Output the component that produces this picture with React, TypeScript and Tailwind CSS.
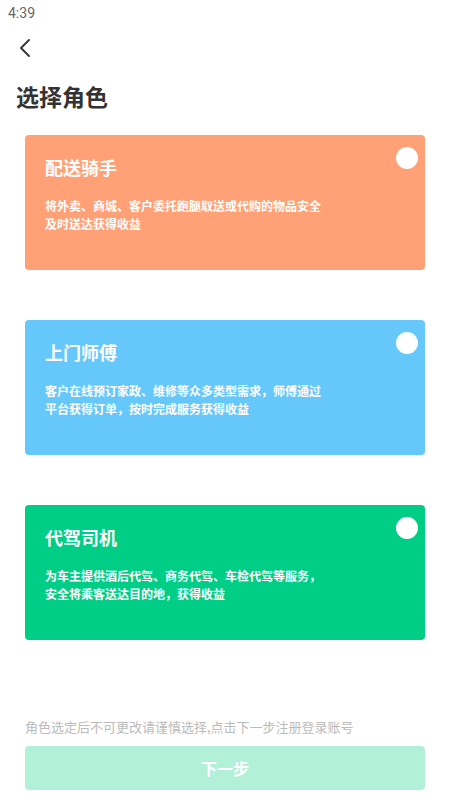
import React from "react";

const roles = [
  {
    title: "配送骑手",
    desc: ["将外卖、商城、客户委托跑腿取送或代购的物品安全", "及时送达获得收益"],
    bg: "bg-[#FFA077]",
  },
  {
    title: "上门师傅",
    desc: ["客户在线预订家政、维修等众多类型需求，师傅通过", "平台获得订单，按时完成服务获得收益"],
    bg: "bg-[#66C8FA]",
  },
  {
    title: "代驾司机",
    desc: ["为车主提供酒后代驾、商务代驾、车检代驾等服务，", "安全将乘客送达目的地，获得收益"],
    bg: "bg-[#00CE87]",
  },
];

export default function App() {
  return (
    <div
      className="w-[450px] h-[800px] bg-white flex flex-col"
      style={{ fontFamily: '"Noto Sans CJK SC", "Noto Sans", sans-serif' }}
    >
      <div className="h-[25px] pl-[8px] pt-[3px] text-[14px] leading-[20px] text-[#666]" style={{ fontFamily: 'Roboto, "Noto Sans", sans-serif' }}>
        4:39
      </div>
      <div className="h-[45px] pl-[18px] flex items-center">
        <svg width="14" height="20" viewBox="0 0 14 20" fill="none">
          <path d="M11 2 L3 10 L11 18" stroke="#333" strokeWidth="1.8" strokeLinecap="round" strokeLinejoin="round" />
        </svg>
      </div>
      <div className="pl-[16px] pt-[9px] text-[23px] leading-[34px] font-bold text-[#333]">选择角色</div>
      <div className="flex flex-col gap-[50px] px-[25px] mt-[22px]">
        {roles.map((r) => (
          <div key={r.title} className={`relative h-[135px] rounded-[4px] ${r.bg} pl-[20px] pt-[19px]`}>
            <div className="text-[18px] leading-[26px] font-semibold text-white">{r.title}</div>
            <div className="mt-[17px] text-[12px] leading-[18px] font-bold text-white">
              {r.desc.map((d) => (
                <div key={d}>{d}</div>
              ))}
            </div>
            <div className="absolute right-[7px] top-[12px] w-[22px] h-[22px] rounded-full bg-white" />
          </div>
        ))}
      </div>
      <div className="flex-1" />
      <div className="px-[25px] text-[13px] leading-[18px] text-[#bbb]">角色选定后不可更改请谨慎选择,点击下一步注册登录账号</div>
      <div className="mx-[25px] mt-[10px] mb-[10px] h-[44px] rounded-[4px] bg-[#B2F0DA] flex items-center justify-center text-white text-[16px] font-bold">
        下一步
      </div>
    </div>
  );
}
